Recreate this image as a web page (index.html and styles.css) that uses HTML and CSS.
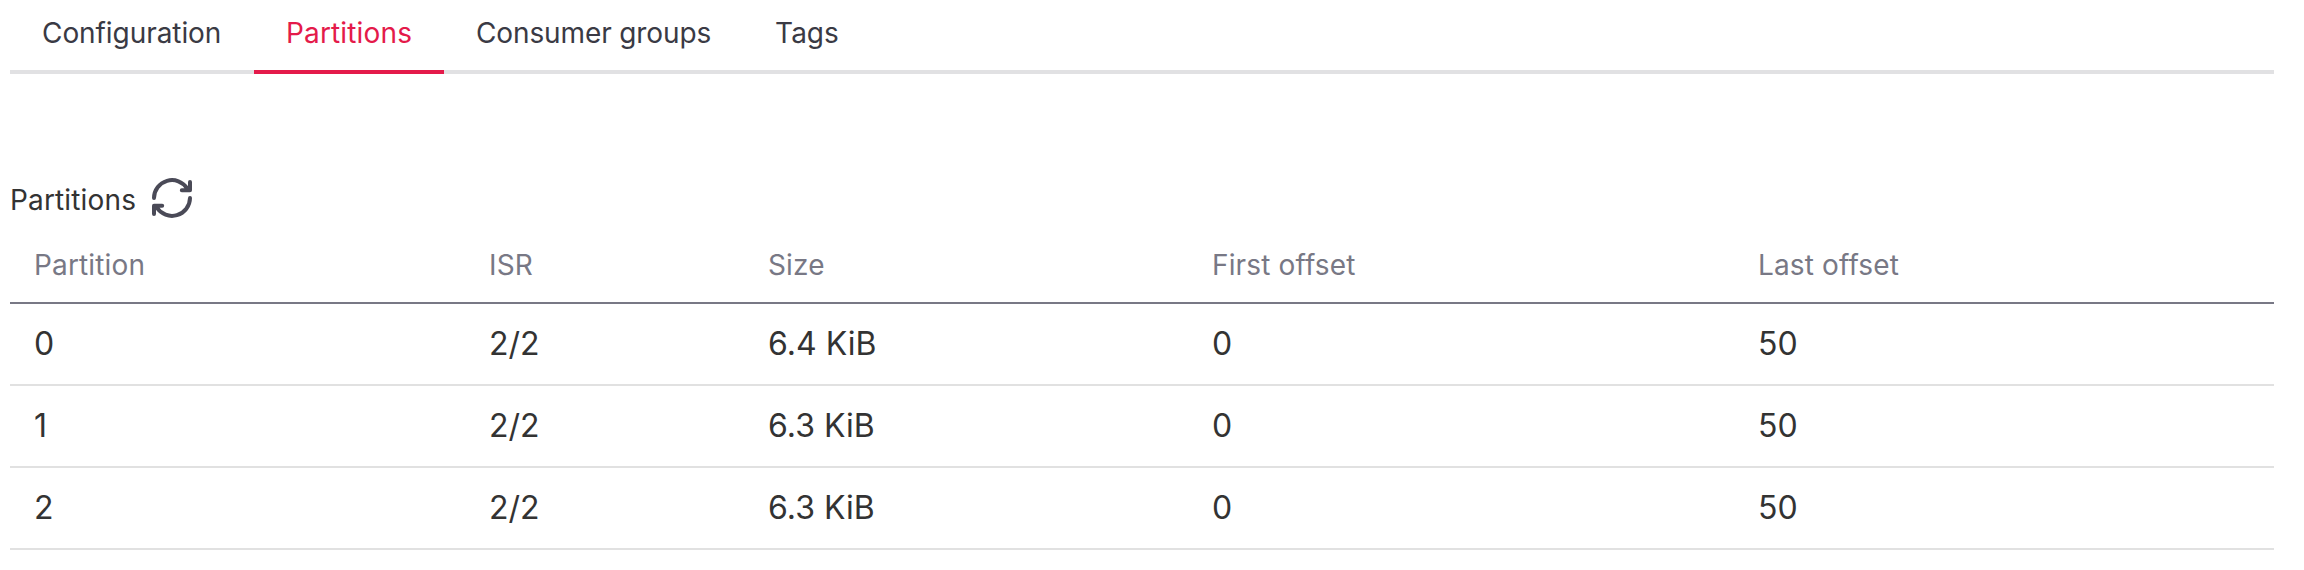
FILE: index.html
```html
<!DOCTYPE html>
<html lang="en">
<head>
<meta charset="utf-8">
<title>Partitions</title>
<link rel="stylesheet" href="styles.css">
</head>
<body>
<main class="page">
  <nav class="tabs">
    <a class="tab tab-first">Configuration</a>
    <a class="tab tab-active">Partitions</a>
    <a class="tab tab-tight">Consumer groups</a>
    <a class="tab">Tags</a>
  </nav>
  <section class="partitions">
    <header class="section-head">
      <span class="section-title">Partitions</span>
      <svg class="refresh" viewBox="0 0 40 40" fill="none" stroke="currentColor" stroke-width="4" stroke-linecap="round" stroke-linejoin="round">
        <path d="M2 20A18 18 0 0 1 35.2 10.5L37 12.2M38 4V12.2H29.8"/>
        <path d="M38 20A18 18 0 0 1 4.8 29.5L3 27.8M2 36V27.8H10.2"/>
      </svg>
    </header>
    <table class="table">
      <colgroup>
        <col class="col-partition"><col class="col-isr"><col class="col-size"><col class="col-first"><col class="col-last">
      </colgroup>
      <thead>
        <tr><th>Partition</th><th>ISR</th><th>Size</th><th>First offset</th><th>Last offset</th></tr>
      </thead>
      <tbody>
        <tr><td>0</td><td>2/2</td><td>6.4 KiB</td><td>0</td><td>50</td></tr>
        <tr><td>1</td><td>2/2</td><td>6.3 KiB</td><td>0</td><td>50</td></tr>
        <tr><td>2</td><td>2/2</td><td>6.3 KiB</td><td>0</td><td>50</td></tr>
      </tbody>
    </table>
  </section>
</main>
</body>
</html>
```
FILE: styles.css
```css
body {
  margin: 0;
  background: #fff;
  color: #333;
  font-family: Inter, sans-serif;
  font-size: 28px;
}
.page {
  padding: 0 30px 0 10px;
}
.tabs {
  display: flex;
  height: 74px;
  box-shadow: inset 0 -4px #e1e1e3;
}
.tab {
  box-sizing: border-box;
  height: 74px;
  padding: 13px 32px 0;
  line-height: 40px;
  color: #3a3a44;
}
.tab-first {
  width: 244px;
  letter-spacing: -0.07px;
}
.tab-tight {
  letter-spacing: -0.12px;
}
.tab-active {
  width: 190px;
  letter-spacing: 0.15px;
  color: #e41a4a;
  border-bottom: 4px solid #e41a4a;
}
.section-head {
  display: flex;
  align-items: center;
  gap: 16px;
  height: 40px;
  padding-top: 104px;
}
.section-title {
  width: 126px;
  line-height: 40px;
  padding-top: 4px;
  letter-spacing: 0.15px;
}
.refresh {
  width: 40px;
  height: 40px;
  color: #4a4a57;
}
.table {
  width: 2264px;
  margin-top: 12px;
  table-layout: fixed;
  border-collapse: separate;
  border-spacing: 0;
}
.col-partition { width: 455px; }
.col-isr { width: 279px; }
.col-size { width: 444px; }
.col-first { width: 546px; }
th,
td {
  box-sizing: border-box;
  padding: 0 24px 2px;
  text-align: left;
  font-weight: 400;
}
th {
  height: 74px;
  letter-spacing: 0.15px;
  color: #787885;
  border-bottom: 2px solid #787885;
}
td {
  height: 82px;
  font-size: 32px;
  border-bottom: 2px solid #e1e1e1;
}
```
